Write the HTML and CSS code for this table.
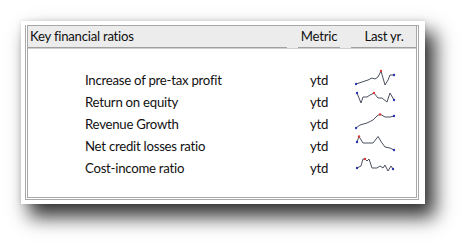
FILE: index.html
```html
<!DOCTYPE html>
<html>
<head>
<meta charset="utf-8">
<link rel="stylesheet" href="styles.css">
</head>
<body>
<div class="card">
  <div class="frame">
    <div class="head">
      <div class="hcell hname">Key financial ratios</div>
      <div class="hcell hmetric">Metric</div>
      <div class="hcell hlast">Last yr.</div>
    </div>
    <div class="rows">
      <div class="row">
        <div class="name">Increase of pre-tax profit</div>
        <div class="metric">ytd</div>
        <div class="spark">
          <svg width="42" height="22" viewBox="0 0 42 22">
            <polyline class="ln" points="1,15 7,13 13,11 17,9 20,10 23,8 26,2 28,9 30,16 33,11 35,6 39,6"/>
            <circle class="lo" cx="1" cy="15" r="1.2"/><circle class="hi" cx="26" cy="2" r="1.2"/><circle class="lo" cx="39" cy="6" r="1.2"/>
          </svg>
        </div>
      </div>
      <div class="row">
        <div class="name">Return on equity</div>
        <div class="metric">ytd</div>
        <div class="spark">
          <svg width="42" height="22" viewBox="0 0 42 22">
            <polyline class="ln" points="2,2 6,12 8,6 12,6 15,4 19,2 23,7 27,7 32,11 35,2 39,9"/>
            <circle class="lo" cx="2" cy="2" r="1.2"/><circle class="hi" cx="19" cy="2" r="1.2"/><circle class="lo" cx="39" cy="9" r="1.2"/>
          </svg>
        </div>
      </div>
      <div class="row">
        <div class="name">Revenue Growth</div>
        <div class="metric">ytd</div>
        <div class="spark">
          <svg width="42" height="22" viewBox="0 0 42 22">
            <polyline class="ln" points="1,15 5,12 12,10 18,7 22,3 25,1 30,4 35,4 39,3"/>
            <circle class="lo" cx="1" cy="15" r="1.2"/><circle class="hi" cx="25" cy="1.5" r="1.2"/><circle class="lo" cx="39" cy="3" r="1.2"/>
          </svg>
        </div>
      </div>
      <div class="row">
        <div class="name">Net credit losses ratio</div>
        <div class="metric">ytd</div>
        <div class="spark">
          <svg width="42" height="22" viewBox="0 0 42 22">
            <polyline class="ln" points="2,7 4,1.5 8,8 13,8 18,8 23,1.5 27,8 30,12 35,13 39,15"/>
            <circle class="lo" cx="2" cy="7" r="1.2"/><circle class="hi" cx="4" cy="1.5" r="1.2"/><circle class="lo" cx="39" cy="15" r="1.2"/>
          </svg>
        </div>
      </div>
      <div class="row">
        <div class="name">Cost-income ratio</div>
        <div class="metric">ytd</div>
        <div class="spark">
          <svg width="42" height="22" viewBox="0 0 42 22">
            <polyline class="ln" points="2,11 6,9 8,2 10,2 12,4 14,2 17,11 22,11 25,9 28,11 30,8 33,14 36,9 38,12"/>
            <circle class="lo" cx="2" cy="11" r="1.2"/><circle class="hi" cx="10" cy="2" r="1.2"/><circle class="lo" cx="38" cy="12" r="1.2"/>
          </svg>
        </div>
      </div>
    </div>
  </div>
</div>
</body>
</html>
```
FILE: styles.css
```css
html, body {
  margin: 0;
  padding: 0;
  background: #ffffff;
}
body {
  font-family: "Lato", "Open Sans", sans-serif;
  font-size: 13.2px;
  letter-spacing: -0.25px;
  color: #111111;
  padding-top: 21px;
  padding-bottom: 43px;
}
.card {
  margin: 0 0 0 21px;
  width: 404px;
  height: 183px;
  box-sizing: border-box;
  padding: 4px 6px 4px 4px;
  background: #ffffff;
  box-shadow: 9px 12px 18px 1px rgba(0, 0, 0, 0.8), 0 0 5px rgba(0, 0, 0, 0.12);
}
.frame {
  height: 175px;
  box-sizing: border-box;
  border: 3px double #a8a8a8;
  border-top-width: 1px;
  border-top-style: solid;
  display: flex;
  flex-direction: column;
}
.head {
  display: grid;
  grid-template-columns: 259px 42px 66px;
  column-gap: 11px;
  height: 22px;
  background: #ececec;
  border-bottom: 1px solid #d0d0d0;
}
.hcell {
  line-height: 21px;
  border-bottom: 1px solid #a0a0a0;
}
.hname {
  padding-left: 2px;
}
.hmetric, .hlast {
  text-align: center;
}
.rows {
  padding-top: 20px;
}
.row {
  display: grid;
  grid-template-columns: 259px 42px 66px;
  column-gap: 11px;
  height: 22px;
  align-items: center;
}
.name {
  padding-left: 57px;
}
.metric {
  text-align: center;
}
.spark {
  height: 22px;
  padding-left: 4px;
}
.spark svg {
  display: block;
}
.ln {
  fill: none;
  stroke: #4b5060;
  stroke-width: 1;
  stroke-linejoin: round;
  stroke-linecap: round;
}
.lo {
  fill: #2a36b0;
}
.hi {
  fill: #e03a3a;
}
```
